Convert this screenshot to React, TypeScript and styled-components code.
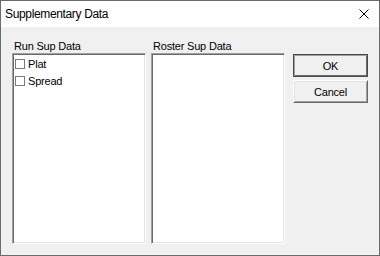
import React from 'react'
import styled, { createGlobalStyle } from 'styled-components'

const GlobalStyle = createGlobalStyle`
  html, body {
    margin: 0;
    padding: 0;
    background: #f0f0f0;
  }
`

const Window = styled.div`
  box-sizing: border-box;
  width: 380px;
  height: 256px;
  border: 1px solid #6b6b6b;
  background: #f0f0f0;
  display: flex;
  flex-direction: column;
  font-family: "Liberation Sans", Arial, sans-serif;
  color: #000;
`

const TitleBar = styled.div`
  height: 26px;
  background: #fff;
  display: flex;
  align-items: center;
  justify-content: space-between;
  padding: 0 10px 0 4px;
`

const Title = styled.span`
  font-size: 12px;
  line-height: 16px;
  letter-spacing: -0.35px;
`

const CloseIcon = () => (
  <svg width="10" height="10" viewBox="0 0 10 10">
    <path d="M0.5 0.5 L9.5 9.5 M9.5 0.5 L0.5 9.5" stroke="#000" strokeWidth="1" fill="none" />
  </svg>
)

const Body = styled.div`
  display: flex;
  padding: 13px 11px 0 11px;
`

const Column = styled.div`
  display: flex;
  flex-direction: column;
  width: 134px;
  margin-right: ${({ $gap }) => $gap}px;
`

const Label = styled.div`
  font-size: 11px;
  height: 13px;
  line-height: 13px;
  padding-left: 2px;
  letter-spacing: -0.2px;
`

const ListBox = styled.div`
  box-sizing: border-box;
  height: 191px;
  background: #fff;
  border: 1px solid;
  border-color: #a0a0a0 #fff #fff #a0a0a0;
  box-shadow: inset 1px 1px 0 #696969, inset -1px -1px 0 #e3e3e3;
  padding: 1px 1px 1px 2px;
`

const Item = styled.div`
  display: flex;
  align-items: center;
  height: 17px;
  font-size: 11px;
  letter-spacing: -0.2px;
`

const Check = styled.span`
  box-sizing: border-box;
  width: 10px;
  height: 10px;
  border: 1px solid #7a7a7a;
  background: #fff;
  margin-right: 3px;
`

const Buttons = styled.div`
  display: flex;
  flex-direction: column;
  gap: 3px;
  margin-top: 14px;
`

const Button = styled.button`
  box-sizing: border-box;
  width: 75px;
  height: 23px;
  padding: 0;
  background: #f0f0f0;
  font-family: "Liberation Sans", Arial, sans-serif;
  font-size: 11px;
  letter-spacing: -0.2px;
  color: #000;
  border: 1px solid;
  border-color: ${({ $default }) => ($default ? '#4a4a4a' : '#fff #696969 #696969 #fff')};
  box-shadow: ${({ $default }) =>
    $default
      ? 'inset 1px 1px 0 #a0a0a0, inset -1px -1px 0 #696969'
      : 'inset 1px 1px 0 #e3e3e3, inset -1px -1px 0 #a0a0a0'};
`

const App = () => (
  <>
    <GlobalStyle />
    <Window>
      <TitleBar>
        <Title>Supplementary Data</Title>
        <CloseIcon />
      </TitleBar>
      <Body>
        <Column $gap={5}>
          <Label>Run Sup Data</Label>
          <ListBox>
            <Item>
              <Check />
              Plat
            </Item>
            <Item>
              <Check />
              Spread
            </Item>
          </ListBox>
        </Column>
        <Column $gap={8}>
          <Label>Roster Sup Data</Label>
          <ListBox />
        </Column>
        <Buttons>
          <Button $default>OK</Button>
          <Button>Cancel</Button>
        </Buttons>
      </Body>
    </Window>
  </>
)

export default App
